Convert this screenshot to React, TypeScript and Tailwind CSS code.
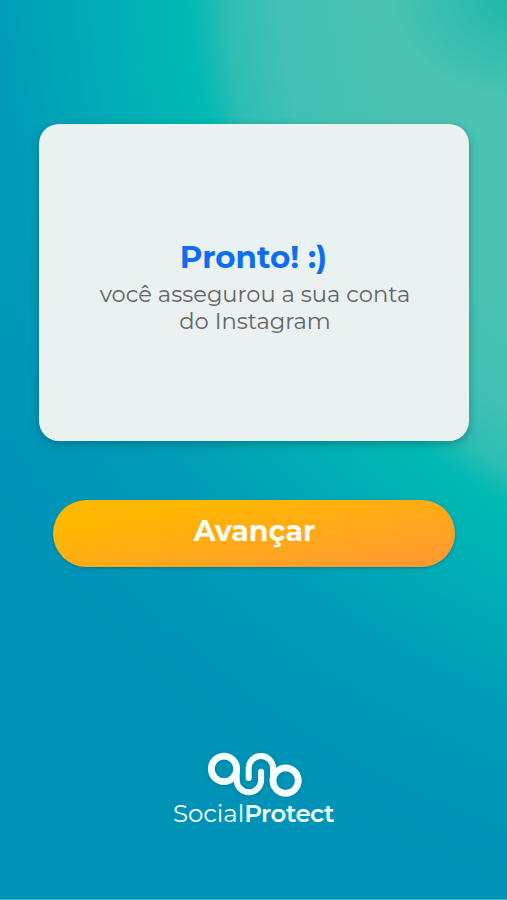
function Logo() {
    return (
        <svg width="96" height="46" viewBox="48 12 96 46" fill="none" stroke="#f4ffff" strokeWidth="6"
             strokeLinecap="round" className="relative left-[1px] drop-shadow-sm">
            <circle cx="65" cy="28.8" r="12.7" strokeWidth="6.8"/>
            <path d="M77.7 28.8V40a12.2 12.2 0 0 0 24.4 0V31.7"/>
            <path d="M89.7 38V28.2a12.2 12.2 0 0 1 24.4 0V41"/>
            <circle cx="126.6" cy="40.6" r="12.7" strokeWidth="6.8"/>
        </svg>
    );
}

function Card() {
    return (
        <div
            className="w-[430px] h-[317px] rounded-[20px] bg-[#e9f2f1] shadow-[0_3px_10px_rgba(0,70,80,0.4)] pt-[115px] text-center whitespace-nowrap">
            <h1 className="text-[31px] leading-9 font-bold text-[#0f6df0]">Pronto! :)</h1>
            <p className="mt-[6px] pl-[3px] text-[22.6px] leading-[27px] text-[#626567]">
                você assegurou a sua conta<br/>do Instagram
            </p>
        </div>
    );
}

function App() {
    return (
        <div
            className="w-[507px] h-[900px] flex flex-col items-center border-b border-[#3fb3d0] pt-[124px] font-['Montserrat','Inter',sans-serif] bg-[radial-gradient(130px_110px_at_520px_-10px,rgba(20,181,168,0.9)_0%,rgba(32,185,173,0)_100%),radial-gradient(660px_611px_at_858px_-20px,#4ac3b2_55%,#4ac3b2_74%,#42c1b4_88%,#2cbdb4_96%,#00bab3_101%,#00adb5_115%,#009db7_129%,#0097b8_142%,#0093b7_160%)]">
            <Card/>
            <button
                className="mt-[59px] w-[402px] h-[67px] shrink-0 rounded-full bg-[linear-gradient(170deg,#ffb800_20%,#ff9933_95%)] shadow-[0_1px_3px_rgba(0,70,80,0.45)] pb-[5px] pl-[2px] text-[28.5px] font-bold text-[#fffdf5]">
                Avançar
            </button>
            <div className="mt-[185px] flex flex-col items-center text-[#f0ffff]">
                <Logo/>
                <div className="text-[24.5px] leading-[30px] font-normal tracking-[-0.1px] whitespace-nowrap">
                    Social<span className="font-semibold tracking-[-0.5px]">Protect</span>
                </div>
            </div>
        </div>
    );
}

export default App;
